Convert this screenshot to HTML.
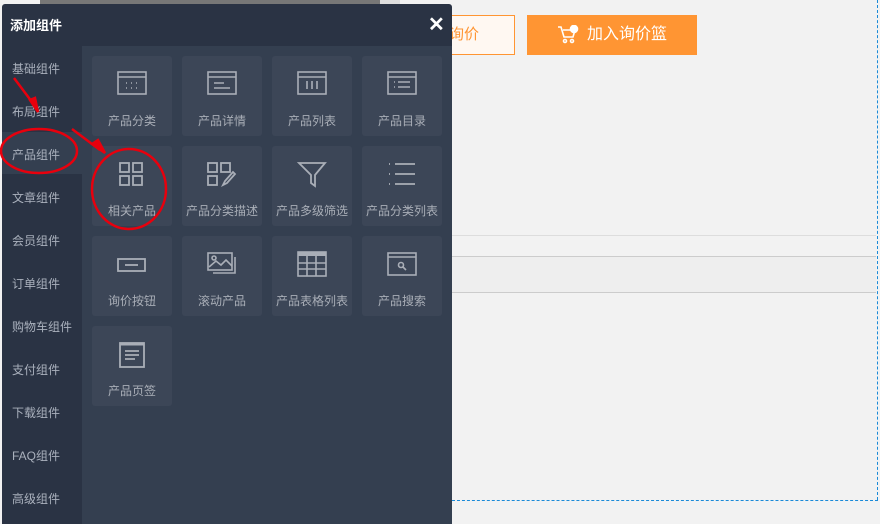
<!DOCTYPE html>
<html><head><meta charset="utf-8"><style>
body{margin:0;width:880px;height:524px;overflow:hidden;background:#f2f2f2;font-family:"Liberation Sans","Noto Sans CJK SC",sans-serif;position:relative}
.abs{position:absolute}
.panel{left:2px;top:4px;width:450px;height:520px;background:#2a3344;border-radius:3px 3px 0 0}
.hd{left:10px;top:15px;color:#fff;font-size:13px;font-weight:bold}
.side{left:0;top:0;width:80px;height:524px}
.side div{position:absolute;left:12px;color:#aab1bd;font-size:12px;white-space:nowrap}
.content{left:82px;top:46px;width:370px;height:478px;background:#343f50}
.tile{position:absolute;width:80px;height:80px;background:#3c4657;border-radius:3px;text-align:center;color:#a9aeb7;font-size:12px}
.tile svg{position:absolute;left:24px;top:14px}
.tile span{position:absolute;left:0;right:0;top:56px;white-space:nowrap}
</style></head><body>
<div class="abs" style="left:40px;top:0;width:340px;height:4px;background:#777"></div>
<div class="abs" style="left:380px;top:0;width:20px;height:4px;background:#ddd"></div>
<div class="abs" style="left:440px;top:15px;width:73px;height:38px;border:1px solid #ff9533;background:#fff8f2;color:#ff9533;font-size:15px;line-height:38px;text-indent:8px">询价</div>
<div class="abs" style="left:527px;top:15px;width:170px;height:40px;background:#ff9533;color:#fff;font-size:16px;line-height:40px">
<svg class="abs" style="left:30px;top:10px" width="22" height="20" viewBox="0 0 22 20" fill="none" stroke="#fff" stroke-width="1.6"><path d="M1 2h3l3 10h9l2-7H6"/><circle cx="8" cy="16" r="1.5"/><circle cx="15" cy="16" r="1.5"/><circle cx="17" cy="4" r="3.5" fill="#fff"/></svg>
<span class="abs" style="left:60px">加入询价篮</span></div>
<div class="abs" style="left:452px;top:235px;width:424px;height:1px;background:#ddd"></div>
<div class="abs" style="left:452px;top:256px;width:424px;height:35px;background:#eee;border-top:1px solid #ccc;border-bottom:1px solid #ccc"></div>
<div class="abs" style="left:877px;top:0;height:500px;border-left:1px dashed #1a8ad8"></div>
<div class="abs" style="left:452px;top:500px;width:426px;border-top:1px dashed #1a8ad8"></div>
<div class="abs panel"></div>
<div class="abs hd">添加组件</div>
<div class="abs" style="left:428px;top:12px;color:#fff;font-size:20px;font-weight:bold">✕</div>
<div class="abs" style="left:2px;top:132px;width:80px;height:42px;background:#343f50"></div>
<div class="abs side">
<div style="top:60px">基础组件</div><div style="top:103px">布局组件</div><div style="top:146px">产品组件</div><div style="top:189px">文章组件</div><div style="top:232px">会员组件</div><div style="top:275px">订单组件</div><div style="top:318px">购物车组件</div><div style="top:361px">支付组件</div><div style="top:404px">下载组件</div><div style="top:447px">FAQ组件</div><div style="top:490px">高级组件</div>
</div>
<div class="abs content"></div>
<div class="abs" style="left:0;top:0">
<div class="tile" style="left:92px;top:56px"><svg width="32" height="26" fill="none" stroke="#a9aeb7" stroke-width="1.6"><rect x="2" y="2" width="28" height="22"/><path d="M2 7h28" /><path d="M10 13h1M15 13h1M20 13h1M10 18h1M15 18h1M20 18h1"/></svg><span>产品分类</span></div>
<div class="tile" style="left:182px;top:56px"><svg width="32" height="26" fill="none" stroke="#a9aeb7" stroke-width="1.6"><rect x="2" y="2" width="28" height="22"/><path d="M2 7h28M8 13h10M8 18h16"/></svg><span>产品详情</span></div>
<div class="tile" style="left:272px;top:56px"><svg width="32" height="26" fill="none" stroke="#a9aeb7" stroke-width="1.6"><rect x="2" y="2" width="28" height="22"/><path d="M2 7h28M11 11v8M16 11v8M21 11v8"/></svg><span>产品列表</span></div>
<div class="tile" style="left:362px;top:56px"><svg width="32" height="26" fill="none" stroke="#a9aeb7" stroke-width="1.6"><rect x="2" y="2" width="28" height="22"/><path d="M2 7h28M8 12h1M12 12h12M8 17h1M12 17h12"/></svg><span>产品目录</span></div>
<div class="tile" style="left:92px;top:146px"><svg width="32" height="28" fill="none" stroke="#a9aeb7" stroke-width="1.8"><rect x="4" y="3" width="9" height="9"/><rect x="17" y="3" width="9" height="9"/><rect x="4" y="16" width="9" height="9"/><rect x="17" y="16" width="9" height="9"/></svg><span>相关产品</span></div>
<div class="tile" style="left:182px;top:146px"><svg width="32" height="28" fill="none" stroke="#a9aeb7" stroke-width="1.8"><rect x="2" y="3" width="9" height="9"/><rect x="15" y="3" width="9" height="9"/><rect x="2" y="16" width="9" height="9"/><path d="M27 12l-8 9-2 4 4-2 8-9z"/></svg><span>产品分类描述</span></div>
<div class="tile" style="left:272px;top:146px"><svg width="32" height="28" fill="none" stroke="#a9aeb7" stroke-width="1.8"><path d="M3 3h26L19 15v11l-4-3v-8z"/></svg><span>产品多级筛选</span></div>
<div class="tile" style="left:362px;top:146px"><svg width="32" height="28" fill="none" stroke="#a9aeb7" stroke-width="1.8"><path d="M3 4h1M9 4h20M3 14h1M9 14h20M3 24h1M9 24h20"/></svg><span>产品分类列表</span></div>
<div class="tile" style="left:92px;top:236px"><svg width="32" height="28" fill="none" stroke="#a9aeb7" stroke-width="1.8"><rect x="2" y="9" width="27" height="12"/><path d="M9 15h13"/></svg><span>询价按钮</span></div>
<div class="tile" style="left:182px;top:236px"><svg width="32" height="28" fill="none" stroke="#a9aeb7" stroke-width="1.6"><rect x="2" y="3" width="24" height="17"/><path d="M29 7v16H7M3 17l7-6 5 4 5-5 6 6"/><circle cx="8" cy="8" r="2"/></svg><span>滚动产品</span></div>
<div class="tile" style="left:272px;top:236px"><svg width="32" height="28" fill="none" stroke="#a9aeb7" stroke-width="1.6"><rect x="2" y="2" width="28" height="24"/><path d="M2 4h28" stroke-width="4"/><path d="M2 13h28M2 19h28M11 6v20M20 6v20"/></svg><span>产品表格列表</span></div>
<div class="tile" style="left:362px;top:236px"><svg width="32" height="28" fill="none" stroke="#a9aeb7" stroke-width="1.6"><rect x="2" y="3" width="28" height="22"/><path d="M2 7h28M20 20l-3-3"/><circle cx="15" cy="15" r="2.5"/></svg><span>产品搜索</span></div>
<div class="tile" style="left:92px;top:326px"><svg width="32" height="28" fill="none" stroke="#a9aeb7" stroke-width="1.8"><rect x="4" y="3" width="24" height="24"/><path d="M4 4h24" stroke-width="3"/><path d="M9 11h14M9 15h14M9 19h10"/></svg><span>产品页签</span></div>
</div>
<svg class="abs" style="left:0;top:0" width="460" height="524" fill="none" stroke="#e8000d" stroke-width="2.5">
<ellipse cx="39" cy="151" rx="38" ry="22"/>
<ellipse cx="129" cy="189" rx="37" ry="40"/>
<path d="M14 78L35 106"/><path d="M30 100l8 12-3-14z" fill="#e8000d"/>
<path d="M72 129L100 150"/><path d="M92 144l13 9-7-13z" fill="#e8000d"/>
</svg>
</body></html>
